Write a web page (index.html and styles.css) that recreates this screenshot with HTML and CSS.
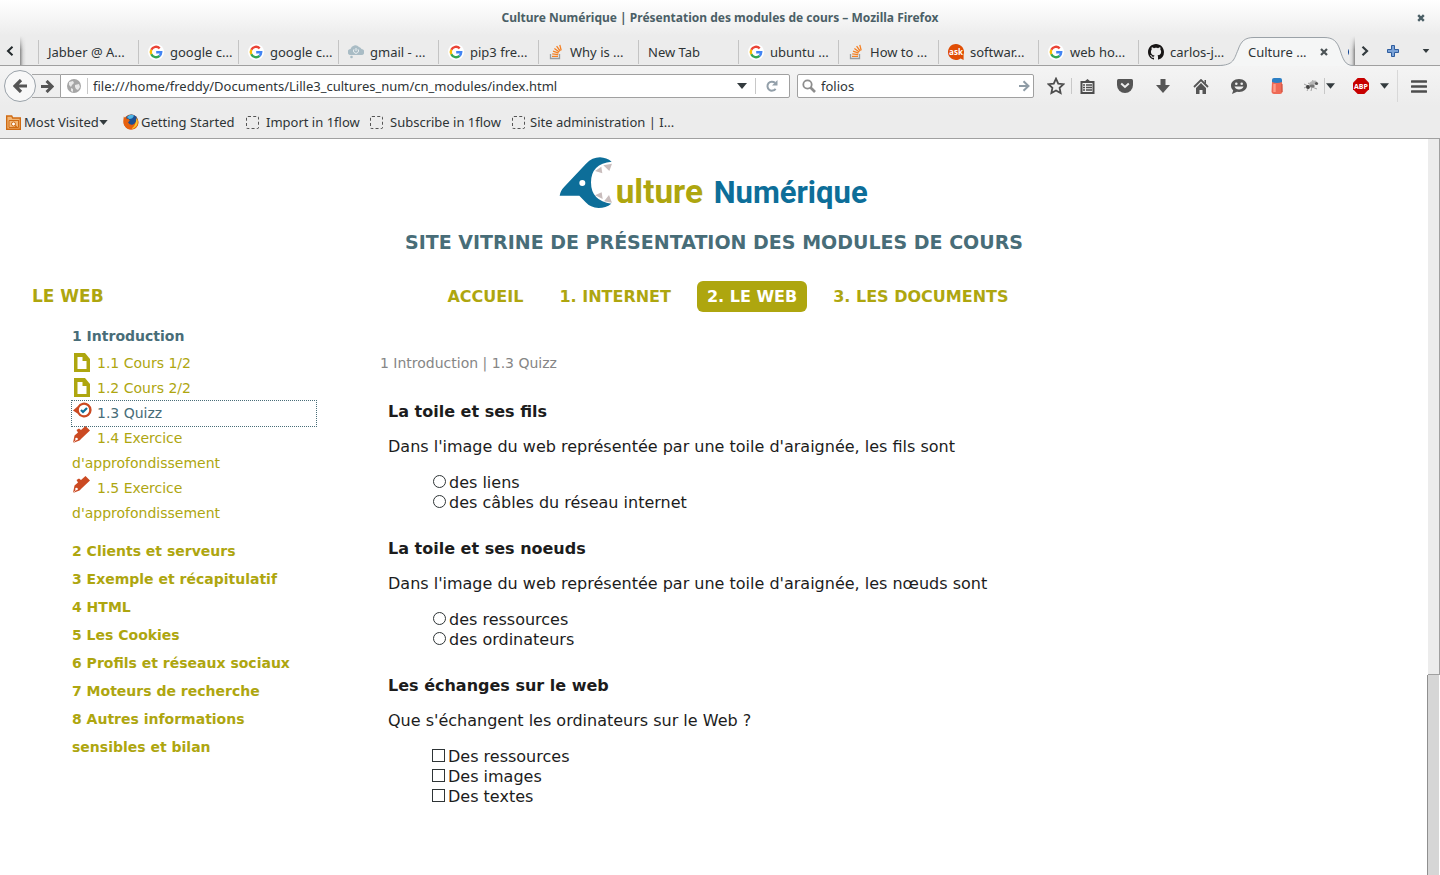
FILE: index.html
```html
<!DOCTYPE html>
<html lang="fr">
<head>
<meta charset="utf-8">
<title>Culture Numérique | Présentation des modules de cours</title>
<link rel="stylesheet" href="styles.css">
</head>
<body>
<svg class="defs" aria-hidden="true">
  <symbol id="google" viewBox="0 0 16 16"><circle cx="8" cy="8" r="8" fill="#fff"/><g fill="none" stroke-width="2.4"><path d="M3.3 5.7A5.200 5.200 0 0 1 11.700 4.300" stroke="#ea4335"/><path d="M3.300 5.700A5.200 5.200 0 0 0 3.300 10.300" stroke="#fbbc05"/><path d="M3.300 10.300A5.200 5.200 0 0 0 11.600 11.800" stroke="#34a853"/><path d="M8.200 8.200H13.200Q13.100 10.500 11.600 11.800" stroke="#4285f4"/></g></symbol>
  <symbol id="stack" viewBox="0 0 16 16"><path d="M2.500 10v4.500h9V10" fill="none" stroke="#9a9c9f" stroke-width="1.300"/><path d="M4 12.400h6M4.200 9.800l6 .8M5 7.200l5.600 2M6.400 4.400l4.900 3.600M8.600 2.200l3.600 4.800M11.800 .8l1.400 5.600" stroke="#f48024" stroke-width="1.300"/></symbol>
  <symbol id="down" viewBox="0 0 10 6"><path d="M0 0h10L5 6z" fill="#333b3e"/></symbol>
  <symbol id="page" viewBox="0 0 18 20"><path d="M2 0h11l5 6v13H2z" fill="#aea60f"/><path d="M5.500 4h5v4h4v8h-9z" fill="#fff"/></symbol>
  <symbol id="pencil" viewBox="0 0 18 18"><path d="M1 17L2.500 9.500 6 6.500 4.500 4 7 2.500 9 4 13.500 0 18 4.500 10 12 7.500 14.500z" fill="#cb4a22"/><path d="M1 17l3-3" stroke="#fff" stroke-width=".6"/><circle cx="4.500" cy="13" r="1.300" fill="#fff"/></symbol>
</svg>

<header class="chrome">
  <div class="titlebar">
    <span>Culture Numérique | Présentation des modules de cours – Mozilla Firefox</span>
    <button class="win-close" aria-label="Fermer"><svg width="8" height="8" viewBox="0 0 8 8"><path d="M1.200 1.200l5.600 5.600M6.800 1.200L1.200 6.800" stroke="#4b5f66" stroke-width="2.400"/></svg></button>
  </div>

  <div class="tabbar">
    <button class="scroll-left" aria-label="Onglets précédents"><svg width="8" height="10" viewBox="0 0 8 10"><path d="M6.500 .8L2 5l4.500 4.200" fill="none" stroke="#22292b" stroke-width="2"/></svg></button>
    <div class="shade shade-left"></div>
    <nav class="tabs" aria-label="Onglets">
      <button class="tab">Jabber @ A...</button>
      <button class="tab"><svg class="fav"><use href="#google"/></svg>google c...</button>
      <button class="tab"><svg class="fav"><use href="#google"/></svg>google c...</button>
      <button class="tab"><svg class="fav" viewBox="0 0 16 16"><path d="M3 11a3 3 0 0 1-.5-6A5 5 0 0 1 11 3a3.500 3.500 0 0 1 2.500 2 3 3 0 0 1-.5 6z" fill="#a9bcc5"/><circle cx="3.500" cy="13" r="1.300" fill="#a9bcc5"/><path d="M6 5.300a2.500 2.500 0 1 0 4 0M8 4v3" fill="none" stroke="#eef3f5"/></svg>gmail - ...</button>
      <button class="tab"><svg class="fav"><use href="#google"/></svg>pip3 fre...</button>
      <button class="tab"><svg class="fav"><use href="#stack"/></svg>Why is ...</button>
      <button class="tab">New Tab</button>
      <button class="tab"><svg class="fav"><use href="#google"/></svg>ubuntu ...</button>
      <button class="tab"><svg class="fav"><use href="#stack"/></svg>How to ...</button>
      <button class="tab"><svg class="fav" viewBox="0 0 16 16"><path d="M8 0a8 8 0 0 1 7.600 10.500V16l-3-1.500A8 8 0 1 1 8 0z" fill="#e04e05"/><text x="8" y="11" text-anchor="middle" class="badge-ask">ask</text></svg>softwar...</button>
      <button class="tab"><svg class="fav"><use href="#google"/></svg>web ho...</button>
      <button class="tab"><svg class="fav" viewBox="0 0 16 16"><path d="M8 0C3.580 0 0 3.580 0 8c0 3.540 2.290 6.530 5.470 7.590.4.070.55-.17.55-.38 0-.19-.01-.82-.01-1.490-2.010.37-2.530-.49-2.690-.94-.09-.23-.48-.94-.82-1.130-.28-.15-.68-.52-.01-.53.63-.01 1.080.58 1.230.82.72 1.210 1.870.87 2.330.66.07-.52.28-.87.51-1.070-1.780-.2-3.640-.89-3.640-3.950 0-.87.31-1.590.82-2.150-.08-.2-.36-1.020.08-2.120 0 0 .67-.21 2.200.82.64-.18 1.320-.27 2-.27s1.360.09 2 .27c1.530-1.040 2.200-.82 2.200-.82.44 1.100.16 1.920.08 2.120.51.56.82 1.270.82 2.150 0 3.070-1.870 3.750-3.650 3.950.29.25.54.73.54 1.480 0 1.070-.01 1.930-.01 2.200 0 .21.15.46.55.38A8.010 8.010 0 0 0 16 8c0-4.420-3.580-8-8-8z" fill="#181616"/></svg>carlos-j...</button>
      <button class="tab active">
        <svg class="tab-shape" viewBox="0 0 130 29"><path d="M-9 28.500C7 28.500 7 22 11 13 14 4 18 .5 27 .5H97C106 .5 110 4 113 13 116 22 118 28.500 126 28.500V29H-9z" fill="#f5f6f6"/><path d="M-9 28.500C7 28.500 7 22 11 13 14 4 18 .5 27 .5H97C106 .5 110 4 113 13 116 22 118 28.500 126 28.500" fill="none" stroke="#9ba2a8"/></svg>
        <span>Culture ...</span>
        <svg width="8" height="8" viewBox="0 0 8 8"><path d="M1 1l6 6M7 1L1 7" stroke="#4c5356" stroke-width="2.200"/></svg>
      </button>
    </nav>
    <svg class="peek" width="6" height="12" viewBox="0 0 6 12"><path d="M6 1C2 1 0 3 0 6s2 5 6 5z" fill="#0b3f91"/></svg>
    <div class="shade shade-right"></div>
    <div class="tab-tools">
      <button aria-label="Onglets suivants"><svg width="8" height="10" viewBox="0 0 8 10"><path d="M1.500 .8L6 5 1.500 9.200" fill="none" stroke="#333b3e" stroke-width="2.200"/></svg></button>
      <button aria-label="Nouvel onglet"><svg width="12" height="12" viewBox="0 0 12 12"><path d="M4.500 .5h3v4h4v3h-4v4h-3v-4h-4v-3h4z" fill="#7ba3d8" stroke="#2f5d9e"/></svg></button>
      <button aria-label="Liste des onglets"><svg width="8" height="4"><use href="#down"/></svg></button>
    </div>
  </div>

  <div class="navbar">
    <button class="back" aria-label="Retour"><svg width="14" height="14" viewBox="0 0 14 14"><path d="M14 7H3M8 1L2 7l6 6" fill="none" stroke="#555" stroke-width="3.200"/></svg></button>
    <button class="forward" aria-label="Suivant"><svg width="13" height="13" viewBox="0 0 14 14"><path d="M0 7h11M6 1l6 6-6 6" fill="none" stroke="#555" stroke-width="3.200"/></svg></button>
    <div class="urlbar">
      <svg width="14" height="14" viewBox="0 0 14 14"><circle cx="7" cy="7" r="7" fill="#a6a6a6"/><path d="M2 3l4-1 1 2-2 2-1 2-2-2zM8 6l4-1 1 3-2 3-2-1-1-2zM4 9l2 1v3l-2-1z" fill="#e8e8e8"/></svg>
      <i class="vline"></i>
      <input type="text" aria-label="Adresse" value="file:///home/freddy/Documents/Lille3_cultures_num/cn_modules/index.html">
      <svg width="10" height="6"><use href="#down"/></svg>
      <i class="vline reload-line"></i>
      <button aria-label="Actualiser"><svg width="12" height="12" viewBox="0 0 12 12"><path d="M9.600 8.800A4.500 4.500 0 1 1 9 2.800" fill="none" stroke="#929fa9" stroke-width="2"/><path d="M11.500 0v5.500H6z" fill="#929fa9"/></svg></button>
    </div>
    <div class="searchbar">
      <svg width="14" height="14" viewBox="0 0 14 14"><circle cx="5.500" cy="5.500" r="4.200" fill="none" stroke="#8d8d8d" stroke-width="1.800"/><path d="M8.500 8.500L13 13" stroke="#8d8d8d" stroke-width="2.600"/></svg>
      <input type="text" aria-label="Recherche" value="folios">
      <button aria-label="Rechercher"><svg width="11" height="12" viewBox="0 0 11 12"><path d="M0 6h9M4.500 1.200L9.500 6l-5 4.800" fill="none" stroke="#8f9ca6" stroke-width="2"/></svg></button>
    </div>
    <div class="tools">
      <button class="tool star" aria-label="Marquer cette page"><svg width="18" height="18" viewBox="0 0 16 16"><path d="M8 1.500l2 4.400 4.600.5-3.400 3.200.9 4.700L8 12l-4.100 2.300.9-4.700L1.400 6.400 6 5.900z" fill="none" stroke="#4d4d4d" stroke-width="1.600"/></svg></button>
      <i class="vline"></i>
      <button class="tool list" aria-label="Marque-pages"><svg width="15" height="15" viewBox="0 0 15 15"><path d="M1.500 3h12v11h-12z" fill="none" stroke="#4d4d4d" stroke-width="2"/><path d="M4.500 2.500L7.500 0l3 2.500z" fill="#4d4d4d"/><path d="M3 6h2M6 6h6M3 8.500h2M6 8.500h6M3 11h2M6 11h6" stroke="#4d4d4d" stroke-width="1.400"/></svg></button>
      <button class="tool" aria-label="Pocket"><svg width="16" height="14" viewBox="0 0 16 14"><path d="M1.500 0h13Q16 0 16 1.500V6A8 8 0 0 1 0 6V1.500Q0 0 1.500 0z" fill="#555"/><path d="M4.200 4.500L8 8l3.800-3.500" fill="none" stroke="#eee" stroke-width="2"/></svg></button>
      <button class="tool" aria-label="Téléchargements"><svg width="14" height="14" viewBox="0 0 14 14"><path d="M4.500 0h5v6H14l-7 8-7-8h4.500z" fill="#555"/></svg></button>
      <button class="tool" aria-label="Accueil"><svg width="16" height="15" viewBox="0 0 16 15"><path d="M1 8l7-7 7 7" fill="none" stroke="#555" stroke-width="1.800"/><path d="M8 4l5 5v6H9.500v-4h-3v4H3V9zM11.500 1H13v4l-1.500-1.500z" fill="#555"/></svg></button>
      <button class="tool" aria-label="Hello"><svg width="16" height="15" viewBox="0 0 16 15"><path d="M8 0c5 0 8 3 8 6.500S13 13 8 13l-2-.2L1 15l1.200-3.500C.7 10 0 8.500 0 6.500 0 3 3 0 8 0z" fill="#555"/><circle cx="5.300" cy="4.800" r="1.300" fill="#eee"/><circle cx="10.700" cy="4.800" r="1.300" fill="#eee"/><path d="M3.500 7.500h9c-1 4-8 4-9 0z" fill="#eee"/></svg></button>
      <button class="tool" aria-label="Effacer"><svg width="12" height="16" viewBox="0 0 12 16"><rect x="1" y="0" width="10" height="7" rx="2" fill="#2c7fc4"/><path d="M1 4q5 2 10 0l.5 10Q11 16 9 16H3Q1 16 .5 14z" fill="#ee6a56"/><path d="M3.500 6v8" stroke="#ff9c88" stroke-width="2.400"/><path d="M11 6v8" stroke="#c94a3b"/></svg></button>
      <button class="tool fly" aria-label="Firebug"><svg width="16" height="14" viewBox="0 0 16 14"><path d="M1 5l4 2-4 2M4 12l2-4M8 12l1-4 5 2M5 4l3 2 2-5" fill="none" stroke="#a0a0a0"/><ellipse cx="10" cy="4" rx="4" ry="2" fill="#b5b5b5" transform="rotate(-20 10 4)"/><circle cx="5" cy="8" r="2" fill="#444"/><ellipse cx="9" cy="7" rx="2.800" ry="1.500" fill="#777"/><circle cx="13.500" cy="4.500" r="1.600" fill="#555"/></svg></button>
      <i class="vline"></i>
      <button class="drop" aria-label="Options Firebug"><svg width="9" height="6"><use href="#down"/></svg></button>
      <button class="tool abp" aria-label="Adblock Plus"><svg width="16" height="16" viewBox="0 0 16 16"><path d="M4.700 0h6.600L16 4.700v6.600L11.300 16H4.700L0 11.300V4.700z" fill="#c70000"/><text x="8" y="11" text-anchor="middle" class="badge-abp">ABP</text></svg></button>
      <button class="drop" aria-label="Options Adblock"><svg width="9" height="6"><use href="#down"/></svg></button>
      <i class="vline tall"></i>
      <button class="tool menu" aria-label="Menu"><svg width="16" height="13" viewBox="0 0 16 13"><path d="M1 1.500h14M1 6.500h14M1 11.500h14" stroke="#4d4d4d" stroke-width="2.600" stroke-linecap="round"/></svg></button>
    </div>
  </div>

  <div class="bookmarks">
    <button class="visited"><svg width="15" height="15" viewBox="0 0 15 15"><path d="M.7 14.300V1h5l1 2h7.600v11.300z" fill="#f2b777" stroke="#cf6a12" stroke-width="1.400"/><path d="M3 5.500h10M3 5.500v7h9.500v-7" fill="none" stroke="#cf6a12"/><circle cx="7.500" cy="9" r="2" fill="#fff" stroke="#cf6a12"/><path d="M9 10.500l2 2" stroke="#cf6a12" stroke-width="1.400"/></svg>Most Visited<svg class="caret" width="9" height="5"><use href="#down"/></svg></button>
    <a href="#" class="started"><svg width="16" height="16" viewBox="0 0 16 16"><circle cx="8" cy="8" r="7.500" fill="#d9540b"/><circle cx="8.500" cy="6.500" r="6" fill="#1c4f92"/><path d="M4 3Q7 -.5 11 1.500 10 5 6 5z" fill="#4fb4e4"/><path d="M.8 2.500q1 1.500 3 2 2 0 3 2L5 8.500q2 3 5 2 3-1 3.500-6Q16 7 15 11q-2 4.500-7 4.500T.7 10Q0 6 .8 2.500z" fill="#e6600d"/><path d="M13.500 4Q16 8 13.500 12 11 15 8 15q5-3 5.500-11z" fill="#f9c52c"/></svg>Getting Started</a>
    <a href="#" class="plain import"><i class="blank"></i>Import in 1flow</a>
    <a href="#" class="plain subscribe"><i class="blank"></i>Subscribe in 1flow</a>
    <a href="#"  class="plain"><i class="blank"></i>Site administration | I...</a>
  </div>
</header>

<div class="viewport">
  <div class="site">
    <header class="masthead">
      <svg class="logo" width="310" height="53" viewBox="57 36 930 159" role="img" aria-label="Culture Numérique">
        <path d="M59 152Q61 137 73 125L138 56Q157 37 180 37 200 38 215 50 153 56 153 112 153 168 214 176 197 189 176 189 151 188 137 172L118 152z" fill="#0d6e99"/>
        <circle cx="127" cy="114" r="9" fill="#fff"/>
        <path d="M165 78L184 65 187 85zM190 61L216 56 208 78zM165 151L185 142 188 162zM192 169L207 150 216 173z" fill="#c9bdbd"/>
        <text x="227" y="174" class="logo-a">ulture</text>
        <text x="521" y="174" class="logo-b">Numérique</text>
      </svg>
      <h1>SITE VITRINE DE PRÉSENTATION DES MODULES DE COURS</h1>
    </header>
    <div class="topline">
      <h2>LE WEB</h2>
      <nav class="modules" aria-label="Modules">
        <a href="#">ACCUEIL</a>
        <a href="#">1. INTERNET</a>
        <a href="#" class="current">2. LE WEB</a>
        <a href="#">3. LES DOCUMENTS</a>
      </nav>
    </div>
    <div class="columns">
      <nav class="sidebar" aria-label="Chapitres">
        <a href="#" class="chapter open">1 Introduction</a>
        <ul class="sections">
          <li><a href="#"><svg class="kind" width="18" height="20"><use href="#page"/></svg>1.1 Cours 1/2</a></li>
          <li><a href="#"><svg class="kind" width="18" height="20"><use href="#page"/></svg>1.2 Cours 2/2</a></li>
          <li><a href="#" class="focused"><svg class="kind quiz" width="20" height="16" viewBox="0 0 20 16"><path d="M1 8.500L5.500 4.500A7.500 7.500 0 1 1 5.500 11.500z" fill="#cb4a22"/><circle cx="12" cy="8" r="5.200" fill="#fff"/><path d="M9 8l2 2 4-4" fill="none" stroke="#0d6e99" stroke-width="2.200"/></svg>1.3 Quizz</a></li>
          <li><a href="#"><svg class="kind pen" width="18" height="18"><use href="#pencil"/></svg>1.4 Exercice d'approfondissement</a></li>
          <li><a href="#"><svg class="kind pen" width="18" height="18"><use href="#pencil"/></svg>1.5 Exercice d'approfondissement</a></li>
        </ul>
        <a href="#" class="chapter">2 Clients et serveurs</a>
        <a href="#" class="chapter">3 Exemple et récapitulatif</a>
        <a href="#" class="chapter">4 HTML</a>
        <a href="#" class="chapter">5 Les Cookies</a>
        <a href="#" class="chapter">6 Profils et réseaux sociaux</a>
        <a href="#" class="chapter">7 Moteurs de recherche</a>
        <a href="#" class="chapter">8 Autres informations sensibles et bilan</a>
      </nav>
      <main>
        <p class="crumbs">1 Introduction | 1.3 Quizz</p>
        <section class="question">
          <h3>La toile et ses fils</h3>
          <p>Dans l'image du web représentée par une toile d'araignée, les fils sont</p>
          <div class="answers">
            <label><input type="radio" name="q1">des liens</label>
            <label><input type="radio" name="q1">des câbles du réseau internet</label>
          </div>
        </section>
        <section class="question">
          <h3>La toile et ses noeuds</h3>
          <p>Dans l'image du web représentée par une toile d'araignée, les nœuds sont</p>
          <div class="answers">
            <label><input type="radio" name="q2">des ressources</label>
            <label><input type="radio" name="q2">des ordinateurs</label>
          </div>
        </section>
        <section class="question">
          <h3>Les échanges sur le web</h3>
          <p>Que s'échangent les ordinateurs sur le Web ?</p>
          <div class="answers">
            <label><input type="checkbox">Des ressources</label>
            <label><input type="checkbox">Des images</label>
            <label><input type="checkbox">Des textes</label>
          </div>
        </section>
      </main>
    </div>
  </div>
  <div class="scrollbar"><div class="trough"></div><div class="thumb"></div></div>
</div>
</body>
</html>
```

FILE: styles.css
```css
* { box-sizing: border-box; }
body {
  margin: 0;
  height: 100vh;
  display: flex;
  flex-direction: column;
  overflow: hidden;
  background: #fff;
  color: #1c1c1c;
  font: 16px/20px "DejaVu Sans", sans-serif;
}
h1, h2, h3, p, ul { margin: 0; padding: 0; }
a { text-decoration: none; color: inherit; }
button { border: 0; padding: 0; background: none; font: inherit; color: inherit; }
svg { flex: none; }
.defs { position: absolute; width: 0; height: 0; }

/* browser chrome */
.chrome {
  flex: none;
  background: linear-gradient(#fff, #ececec 36px);
  border-bottom: 1px solid #a0a0a0;
  color: #2e3436;
  font: 13px/18px "Noto Sans", sans-serif;
}
.titlebar {
  display: flex;
  align-items: center;
  justify-content: center;
  position: relative;
  height: 36px;
  color: #4b5f66;
  font-size: 12px;
  font-weight: 700;
}
.win-close { position: absolute; right: 15px; top: 14px; display: flex; }

.tabbar { display: flex; height: 30px; border-bottom: 1px solid #a0a0a0; }
.scroll-left { width: 20px; display: flex; align-items: center; justify-content: center; }
.shade { width: 6px; }
.shade-left { margin-right: 12px; background: linear-gradient(#ececec, transparent 14px), linear-gradient(90deg, #888, #d8d8d8 3px, #ececec); }
.shade-right { background: linear-gradient(#ececec, transparent 14px), linear-gradient(270deg, #888, #d8d8d8 3px, #ececec); }
.tabs { display: flex; }
.tab {
  display: flex;
  align-items: center;
  gap: 6px;
  width: 100px;
  padding: 2px 0 0 9px;
  border-left: 1px solid #c6c6c6;
  border-image: linear-gradient(transparent 5px, #c4c4c4 5px, #c4c4c4 27px, transparent 27px) 1;
  white-space: nowrap;
  overflow: hidden;
}
.fav { width: 16px; height: 16px; }
.badge-ask { font: bold 8px "Open Sans", sans-serif; fill: #fff; }
.badge-abp { font: bold 7px "Open Sans", sans-serif; fill: #fff; }
.tab.active {
  position: relative;
  justify-content: space-between;
  padding-right: 10px;
  border-image: none;
  border-color: transparent;
  overflow: visible;
}
.tab.active > * { position: relative; }
.tab.active > .tab-shape { position: absolute; left: -12px; top: 1px; width: 130px; height: 29px; overflow: visible; }
.peek { margin: 10px -5px 0 auto; }
.tab-tools { display: flex; width: 85px; padding-left: 4px; }
.tab-tools button { flex: 1; display: flex; align-items: center; justify-content: center; }
.tab-tools button:first-child { flex: none; width: 12px; }
.tab-tools button:nth-child(2) { flex: none; width: 44px; }
.tab-tools button:last-child { padding-right: 4px; }

.navbar { display: flex; align-items: center; height: 40px; padding-left: 4px; background: linear-gradient(#f4f4f4, #ececec); }
.back {
  position: relative;
  z-index: 1;
  width: 32px;
  height: 32px;
  display: flex;
  align-items: center;
  justify-content: center;
  border: 1px solid #9aa2a9;
  border-radius: 50%;
  background: #f8f8f8;
}
.forward {
  width: 28px;
  height: 24px;
  margin-left: -4px;
  padding-left: 2px;
  display: flex;
  align-items: center;
  justify-content: center;
  border: solid #a6a6a6;
  border-width: 1px 0;
}
.urlbar, .searchbar { display: flex; align-items: center; height: 24px; border: 1px solid #a0a0a0; background: #fff; }
.urlbar { flex: 1; padding: 0 11px 0 6px; border-radius: 0 2px 2px 0; }
.urlbar .vline { margin: 0 5px 0 6px; }
.urlbar .reload-line { margin: 0 10px 0 8px; }
.urlbar button, .searchbar button { display: flex; }
.searchbar { width: 237px; margin-left: 7px; padding: 0 3px 0 4px; border-radius: 2px; }
.chrome input { flex: 1; min-width: 0; border: 0; padding: 0; background: none; font: inherit; color: inherit; outline: 0; }
.searchbar input { margin-left: 5px; }
.vline { flex: none; width: 1px; height: 16px; background: #c8c8c8; }
.vline.tall { height: 32px; margin-left: 8px; background: #d8d8d8; }
.tools { display: flex; align-items: center; width: 406px; padding-left: 7px; }
.tool { flex: none; width: 38px; display: flex; align-items: center; justify-content: center; }
.tool.star { width: 30px; }
.tool.list { width: 34px; padding-right: 4px; }
.tool.fly { width: 28px; padding-left: 2px; }
.drop { flex: none; width: 10px; display: flex; justify-content: center; }
.tool.abp { width: 44px; padding-left: 8px; }
.tool.menu { flex: 1; }

.bookmarks { display: flex; align-items: center; height: 32px; padding: 0 6px; }
.bookmarks button, .bookmarks a { display: flex; align-items: center; gap: 3px; white-space: nowrap; }
.visited { width: 117px; }
.visited .caret { margin-left: -3px; }
.started { width: 123px; }
.bookmarks .started { gap: 2px; }
.bookmarks .plain { gap: 5px; }
.bookmarks .import { width: 124px; gap: 7px; }
.bookmarks .subscribe { width: 142px; gap: 7px; }
.blank { width: 13px; height: 13px; border: 1px dashed #555; border-radius: 2px; }

/* page */
.viewport { flex: 1; min-height: 0; display: flex; }
.site { flex: 1; overflow: hidden; }
.masthead { display: flex; flex-direction: column; align-items: center; padding-top: 18px; }
.logo { overflow: visible; }
.logo-a, .logo-b { font: bold 100px Roboto, sans-serif; fill: #aea60f; }
.logo-b { fill: #0d6e99; font-size: 93px; }
h1 { margin-top: 20px; font-size: 19px; line-height: 24px; color: #486d78; }
.topline { display: grid; grid-template-columns: 316px 1fr 320px; align-items: center; margin-top: 27px; padding-left: 32px; }
h2 { padding-bottom: 2px; font-size: 17px; line-height: 24px; color: #aea60f; }
.modules { display: flex; justify-content: center; gap: 16px; }
.modules a { padding: 5px 10px; border-radius: 6px; font-weight: bold; line-height: 21px; color: #aea60f; white-space: nowrap; }
.modules .current { background: #aea60f; color: #fff; }
.columns { display: flex; gap: 64px; padding: 10px 40px 0 72px; }
.sidebar { flex: none; width: 244px; font-size: 14px; color: #aea60f; }
.chapter { display: block; font-weight: bold; line-height: 28px; }
.chapter.open { color: #486d78; }
.sections { list-style: none; padding-top: 1px; margin-bottom: 11px; }
.sections a { display: block; line-height: 25px; }
.kind { margin-right: 7px; vertical-align: -5px; }
.kind.quiz { margin-right: 5px; vertical-align: 0; }
.kind.pen { vertical-align: -1px; }
.sections .focused { color: #486d78; outline: 1px dotted #486d78; }
main { flex: 1; padding-top: 31px; }
.crumbs { font-size: 14px; color: #868686; }
.question { margin-left: 8px; padding-top: 26px; }
.crumbs + .question { padding-top: 29px; }
.question h3 { font-size: 16px; margin-bottom: 15px; }
.answers { display: flex; flex-direction: column; align-items: flex-start; margin: 16px 0 0 44px; }
.answers label { display: flex; align-items: center; }
.answers input { appearance: none; width: 13px; height: 13px; margin: 0 3px 3px 0; border: 1px solid #2e3436; background: #fff; }
.answers input[type="radio"] { border-radius: 50%; margin-left: 1px; }

.scrollbar { flex: none; width: 12px; display: flex; flex-direction: column; }
.trough { flex: 535; background: #ececec; border-right: 1px solid #a0a0a0; border-bottom: 1px solid #a0a0a0; }
.thumb { flex: 200; margin: 0 1px 0 -1px; background: #d6d6d6; border-left: 1px solid #8f8f8f; }
```
